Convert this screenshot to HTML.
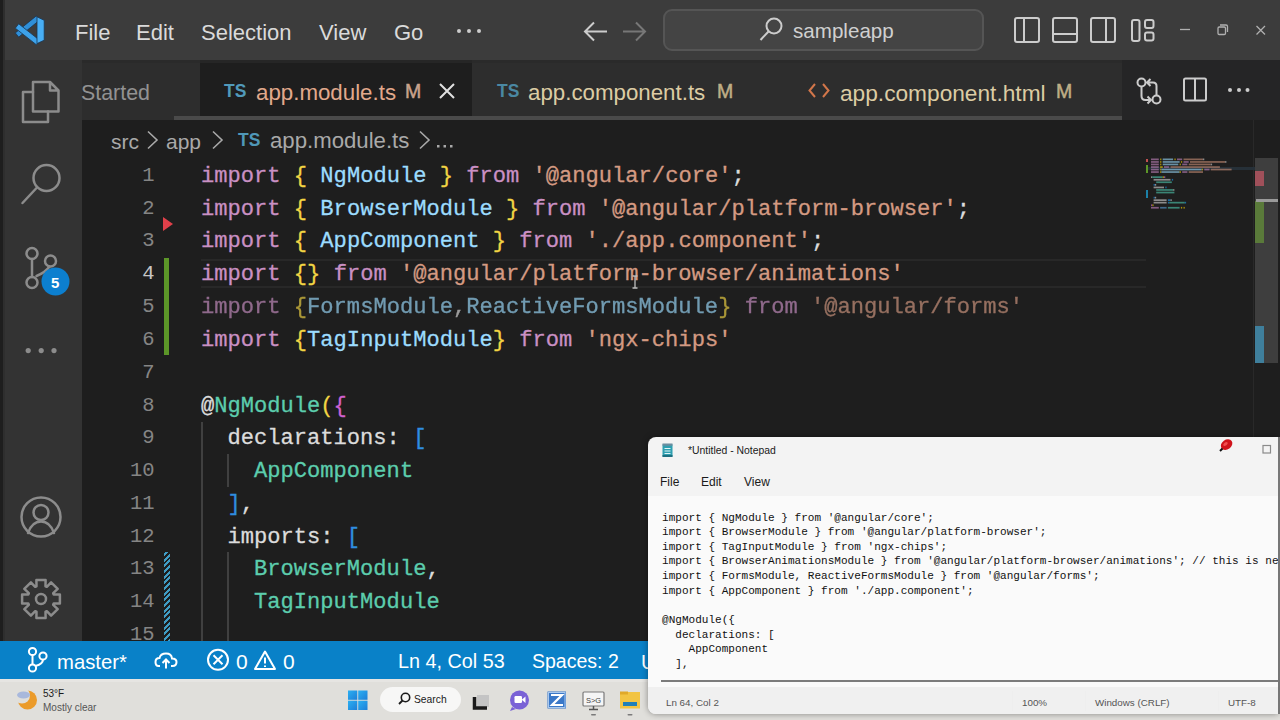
<!DOCTYPE html>
<html><head><meta charset="utf-8">
<style>
*{margin:0;padding:0;box-sizing:border-box}
html,body{width:1280px;height:720px;overflow:hidden;background:#1e1e1e;font-family:"Liberation Sans",sans-serif}
.a{position:absolute}
.t{position:absolute;white-space:pre;line-height:1}
#title{left:0;top:0;width:1280px;height:60px;background:#3c3c3c}
#act{left:0;top:60px;width:82px;height:581px;background:#333333}
#tabs{left:82px;top:60px;width:1198px;height:60px;background:#252526}
#editor{left:82px;top:120px;width:1198px;height:521px;background:#1e1e1e}
#status{left:0;top:641px;width:1280px;height:38px;background:#0981c8}
#taskbar{left:0;top:679px;width:1280px;height:41px;background:#e0dfdb}
.menu{color:#dadada;font-size:22px;top:21.5px}
.code{-webkit-text-stroke:0.3px currentColor;font-family:"Liberation Mono",monospace;font-size:22.1px;white-space:pre;position:absolute;left:201px;line-height:33px;height:33px}
.ln{font-family:"Liberation Mono",monospace;font-size:20.5px;position:absolute;width:80px;left:74.5px;text-align:right;color:#858585;line-height:33px;height:33px}
.k{color:#ca90c4}.b{color:#f2d544}.v{color:#9cdcfe}.s{color:#d49a82}.w{color:#dcdcdc}.g{color:#5ccdad}.p{color:#d062d0}.bl{color:#2f8ee0}
#np{left:648px;top:437px;width:630px;height:277px;background:#f3f3f3;border-radius:8px 0 0 8px;overflow:hidden;box-shadow:0 0 6px rgba(0,0,0,.4)}
.npc{font-family:"Liberation Mono",monospace;font-size:11.05px;line-height:14.65px;color:#111;white-space:pre;position:absolute}
</style></head><body>
<div id="title" class="a"></div>
<div id="act" class="a"></div>
<div id="tabs" class="a"></div>
<div id="editor" class="a"></div>
<div id="status" class="a"></div>
<div id="taskbar" class="a"></div>


<!-- title bar content -->
<svg class="a" style="left:0;top:0" width="60" height="60" viewBox="0 0 60 60">
<g stroke="#1a3550" stroke-width="0.8" stroke-linejoin="round">
<path d="M18.7 37.1L15.3 32.9L36.3 15.9L39.7 20.1Z" fill="#2f8fd8"/>
<path d="M15.3 28.2L18.7 23.8L39.7 40.3L36.3 44.7Z" fill="#3da2ea"/>
<path d="M37 16.8L44.2 20.3V40.2L37 43.6Z" fill="#48aef4"/>
</g>
</svg>
<svg class="a" style="left:455px;top:27px" width="28" height="8"><circle cx="4" cy="4" r="2" fill="#ccc"/><circle cx="14" cy="4" r="2" fill="#ccc"/><circle cx="24" cy="4" r="2" fill="#ccc"/></svg>
<svg class="a" style="left:582px;top:20px" width="28" height="24" fill="none" stroke="#cccccc" stroke-width="2"><path d="M3 11.5H25M12 2.5L3 11.5L12 20.5"/></svg>
<svg class="a" style="left:620px;top:20px" width="28" height="24" fill="none" stroke="#777777" stroke-width="2"><path d="M3 11.5H25M16 2.5L25 11.5L16 20.5"/></svg>
<div class="a" style="left:663px;top:9px;width:321px;height:42px;border:2px solid #555555;border-radius:9px;background:#444444"></div>
<svg class="a" style="left:758px;top:16px" width="28" height="28" fill="none" stroke="#cccccc" stroke-width="2"><circle cx="16" cy="10" r="7.5"/><path d="M10.5 15.5L2.5 24"/></svg>
<div class="t" style="left:793px;top:21px;font-size:20.6px;color:#d0d0d0">sampleapp</div>
<svg class="a" style="left:1012px;top:16px" width="150" height="30" fill="none" stroke="#cccccc" stroke-width="2">
<rect x="3" y="2" width="24" height="24" rx="2"/><path d="M12 2V26"/>
<rect x="41" y="2" width="24" height="24" rx="2"/><path d="M41 18H65"/>
<rect x="79" y="2" width="24" height="24" rx="2"/><path d="M94 2V26"/>
<rect x="120" y="4" width="7.5" height="21" rx="2"/><rect x="133" y="4" width="8.5" height="8" rx="2"/><rect x="133" y="16.5" width="8.5" height="8" rx="2"/>
</svg>
<svg class="a" style="left:1170px;top:16px" width="110" height="28" fill="none" stroke="#b0b0b0" stroke-width="1.3">
<path d="M10 13.5H20"/>
<rect x="48" y="11" width="7.5" height="7.5" rx="1.2"/><path d="M50 9H56Q57.5 9 57.5 10.5V16"/>
<path d="M86.5 10L95 18.5M95 10L86.5 18.5"/>
</svg>



<!-- activity bar -->
<div class="a" style="left:0;top:0;width:3px;height:641px;background:#1e1e1e"></div><div class="a" style="left:3px;top:0;width:2px;height:641px;background:#2e2e2e"></div>
<svg class="a" style="left:0;top:0" width="82" height="641" viewBox="0 0 82 641" fill="none" stroke="#8c8c8c" stroke-width="2.5" stroke-linejoin="round" stroke-linecap="round">
<path d="M33 82H50L58.5 90.5V111.5H33Z M50 82V90.5H58.5"/>
<path d="M33 92H23V122H48V111.5"/>
<circle cx="46.5" cy="178" r="13"/><path d="M37 187.5L22.5 203"/>
<circle cx="32" cy="253.5" r="5.5"/><circle cx="50.5" cy="261" r="5.5"/><circle cx="32" cy="282.5" r="5.5"/>
<path d="M32 259V277M36.5 276Q46 272 49.5 266.5"/>
<circle cx="41" cy="517" r="19.5"/><circle cx="41" cy="512.5" r="7.5"/><path d="M28 533Q32 521.5 41 521.5Q50 521.5 54 533"/>
<path d="M36.5 586.3 L36.4 580.1 L45.6 580.1 L45.5 586.3 L46.8 586.8 L51.1 582.3 L57.7 588.9 L53.2 593.2 L53.7 594.5 L59.9 594.4 L59.9 603.6 L53.7 603.5 L53.2 604.8 L57.7 609.1 L51.1 615.7 L46.8 611.2 L45.5 611.7 L45.6 617.9 L36.4 617.9 L36.5 611.7 L35.2 611.2 L30.9 615.7 L24.3 609.1 L28.8 604.8 L28.3 603.5 L22.1 603.6 L22.1 594.4 L28.3 594.5 L28.8 593.2 L24.3 588.9 L30.9 582.3 L35.2 586.8Z" stroke-linejoin="round"/><circle cx="41" cy="599" r="5"/>
</svg>
<svg class="a" style="left:0;top:0" width="82" height="641" viewBox="0 0 82 641">
<circle cx="55.5" cy="281.5" r="14" fill="#0c7fcf"/>
<circle cx="28.2" cy="350.6" r="2.6" fill="#8c8c8c"/><circle cx="41.2" cy="350.6" r="2.6" fill="#8c8c8c"/><circle cx="54" cy="350.6" r="2.6" fill="#8c8c8c"/>
</svg>
<div class="t" style="left:51px;top:275px;font-size:15px;font-weight:bold;color:#ffffff">5</div>

<!-- tabs -->
<div class="a" style="left:82px;top:60px;width:118px;height:60px;background:#2d2d2d"></div>
<div class="a" style="left:200px;top:60px;width:272px;height:60px;background:#1e1e1e"></div>
<div class="a" style="left:472px;top:60px;width:650px;height:60px;background:#2d2d2d"></div>
<div class="a" style="left:174px;top:116px;width:948px;height:4px;background:#4a4a4a"></div>
<div class="a" style="left:82px;top:60px;width:1198px;height:3px;background:#292929;opacity:.7"></div>
<div class="t" style="left:81px;top:82.5px;font-size:21.4px;color:#929292">Started</div>
<div class="t" style="left:224px;top:82.5px;font-size:17.5px;font-weight:bold;color:#519aba">TS</div>
<div class="t" style="left:256px;top:82px;font-size:22.3px;color:#e2a98c">app.module.ts</div>
<div class="t" style="left:405px;top:82px;font-size:19.5px;-webkit-text-stroke:0.5px currentColor;color:#c9a28c">M</div>
<svg class="a" style="left:437px;top:81px" width="20" height="20" fill="none" stroke="#e0e0e0" stroke-width="2"><path d="M3 3L17 17M17 3L3 17"/></svg>
<div class="t" style="left:497px;top:82.5px;font-size:17.5px;font-weight:bold;color:#4a88a3">TS</div>
<div class="t" style="left:528px;top:82px;font-size:22.3px;color:#dccca4">app.component.ts</div>
<div class="t" style="left:717px;top:82px;font-size:19.5px;-webkit-text-stroke:0.5px currentColor;color:#bfae86">M</div>
<svg class="a" style="left:808px;top:82px" width="22" height="18" fill="none" stroke="#d2764a" stroke-width="2"><path d="M7 2L1.5 8.5L7 15M15 2L20.5 8.5L15 15"/></svg>
<div class="t" style="left:840px;top:82px;font-size:22.7px;color:#dccca4">app.component.html</div>
<div class="t" style="left:1056px;top:82px;font-size:19.5px;-webkit-text-stroke:0.5px currentColor;color:#bfae86">M</div>
<div class="a" style="left:1122px;top:60px;width:158px;height:60px;background:#252526"></div>
<svg class="a" style="left:1130px;top:72px" width="140" height="36" fill="none" stroke="#cccccc" stroke-width="2">
<circle cx="11.5" cy="10.5" r="4"/><circle cx="26.5" cy="27.5" r="4"/>
<path d="M11.5 14.5V24Q11.5 28 15.5 28H21M17.5 24.5L21 28L17.5 31.5"/>
<path d="M26.5 23.5V14Q26.5 10.5 23 10.5H17M20.5 7L17 10.5L20.5 14"/>
<rect x="54" y="6.5" width="22" height="22" rx="1.5"/><path d="M65 6.5V28.5"/>
</svg>
<svg class="a" style="left:1222px;top:84px" width="32" height="12" fill="#cccccc"><circle cx="8" cy="6" r="2"/><circle cx="17" cy="6" r="2"/><circle cx="25.5" cy="6" r="2"/></svg>

<!-- breadcrumbs -->
<div class="t" style="left:111px;top:131px;font-size:21px;color:#a9a9a9">src</div>
<svg class="a" style="left:146px;top:130px" width="14" height="20" fill="none" stroke="#a9a9a9" stroke-width="1.6"><path d="M2 1.5L11 10L2 18.5"/></svg>
<div class="t" style="left:166px;top:131px;font-size:21px;color:#a9a9a9">app</div>
<svg class="a" style="left:211px;top:130px" width="14" height="20" fill="none" stroke="#a9a9a9" stroke-width="1.6"><path d="M2 1.5L11 10L2 18.5"/></svg>
<div class="t" style="left:238px;top:132px;font-size:17.5px;font-weight:bold;color:#4f98b8">TS</div>
<div class="t" style="left:270px;top:130px;font-size:22.2px;color:#a9a9a9">app.module.ts</div>
<svg class="a" style="left:418px;top:130px" width="14" height="20" fill="none" stroke="#a9a9a9" stroke-width="1.6"><path d="M2 1.5L11 10L2 18.5"/></svg>
<svg class="a" style="left:436px;top:144px" width="20" height="6" fill="#a9a9a9"><rect x="1" y="1" width="2.5" height="2.5"/><rect x="7.5" y="1" width="2.5" height="2.5"/><rect x="14" y="1" width="2.5" height="2.5"/></svg>


<!-- minimap + scrollbar -->
<div class="a" style="left:1253px;top:120px;width:1px;height:317px;background:#292929"></div>
<div class="a" style="left:1146px;top:166.5px;width:109px;height:3px;background:#263038"></div>
<svg class="a" style="left:0;top:0;opacity:.6;filter:blur(0.35px)" width="1280" height="720" viewBox="0 0 1280 720">
<rect x="1151.0" y="158.5" width="7.8" height="1.7" fill="#c586c0"/>
<rect x="1160.1" y="158.5" width="1.3" height="1.7" fill="#ffd700"/>
<rect x="1162.7" y="158.5" width="10.4" height="1.7" fill="#9cdcfe"/>
<rect x="1174.4" y="158.5" width="1.3" height="1.7" fill="#ffd700"/>
<rect x="1177.0" y="158.5" width="5.2" height="1.7" fill="#c586c0"/>
<rect x="1183.5" y="158.5" width="19.5" height="1.7" fill="#ce9178"/>
<rect x="1203.0" y="158.5" width="1.3" height="1.7" fill="#d4d4d4"/>
<rect x="1151.0" y="161.1" width="7.8" height="1.7" fill="#c586c0"/>
<rect x="1160.1" y="161.1" width="1.3" height="1.7" fill="#ffd700"/>
<rect x="1162.7" y="161.1" width="16.9" height="1.7" fill="#9cdcfe"/>
<rect x="1180.9" y="161.1" width="1.3" height="1.7" fill="#ffd700"/>
<rect x="1183.5" y="161.1" width="5.2" height="1.7" fill="#c586c0"/>
<rect x="1190.0" y="161.1" width="35.1" height="1.7" fill="#ce9178"/>
<rect x="1225.1" y="161.1" width="1.3" height="1.7" fill="#d4d4d4"/>
<rect x="1151.0" y="163.6" width="7.8" height="1.7" fill="#c586c0"/>
<rect x="1160.1" y="163.6" width="1.3" height="1.7" fill="#ffd700"/>
<rect x="1162.7" y="163.6" width="15.6" height="1.7" fill="#9cdcfe"/>
<rect x="1179.6" y="163.6" width="1.3" height="1.7" fill="#ffd700"/>
<rect x="1182.2" y="163.6" width="5.2" height="1.7" fill="#c586c0"/>
<rect x="1188.7" y="163.6" width="22.1" height="1.7" fill="#ce9178"/>
<rect x="1210.8" y="163.6" width="1.3" height="1.7" fill="#d4d4d4"/>
<rect x="1151.0" y="166.2" width="7.8" height="1.7" fill="#c586c0"/>
<rect x="1160.1" y="166.2" width="2.6" height="1.7" fill="#ffd700"/>
<rect x="1164.0" y="166.2" width="5.2" height="1.7" fill="#c586c0"/>
<rect x="1170.5" y="166.2" width="49.4" height="1.7" fill="#ce9178"/>
<rect x="1151.0" y="168.7" width="7.8" height="1.7" fill="#c586c0"/>
<rect x="1160.1" y="168.7" width="1.3" height="1.7" fill="#ffd700"/>
<rect x="1161.4" y="168.7" width="40.3" height="1.7" fill="#9cdcfe"/>
<rect x="1201.7" y="168.7" width="1.3" height="1.7" fill="#ffd700"/>
<rect x="1204.3" y="168.7" width="5.2" height="1.7" fill="#c586c0"/>
<rect x="1210.8" y="168.7" width="20.8" height="1.7" fill="#ce9178"/>
<rect x="1151.0" y="171.2" width="7.8" height="1.7" fill="#c586c0"/>
<rect x="1160.1" y="171.2" width="1.3" height="1.7" fill="#ffd700"/>
<rect x="1161.4" y="171.2" width="18.2" height="1.7" fill="#9cdcfe"/>
<rect x="1179.6" y="171.2" width="1.3" height="1.7" fill="#ffd700"/>
<rect x="1182.2" y="171.2" width="5.2" height="1.7" fill="#c586c0"/>
<rect x="1188.7" y="171.2" width="14.3" height="1.7" fill="#ce9178"/>
<rect x="1151.0" y="176.3" width="1.3" height="1.7" fill="#d4d4d4"/>
<rect x="1152.3" y="176.3" width="10.4" height="1.7" fill="#4ec9b0"/>
<rect x="1162.7" y="176.3" width="1.3" height="1.7" fill="#ffd700"/>
<rect x="1164.0" y="176.3" width="1.3" height="1.7" fill="#da70d6"/>
<rect x="1153.6" y="178.9" width="16.9" height="1.7" fill="#d4d4d4"/>
<rect x="1171.8" y="178.9" width="1.3" height="1.7" fill="#179fff"/>
<rect x="1156.2" y="181.4" width="15.6" height="1.7" fill="#4ec9b0"/>
<rect x="1153.6" y="184.0" width="1.3" height="1.7" fill="#179fff"/>
<rect x="1154.9" y="184.0" width="1.3" height="1.7" fill="#d4d4d4"/>
<rect x="1153.6" y="186.6" width="10.4" height="1.7" fill="#d4d4d4"/>
<rect x="1165.3" y="186.6" width="1.3" height="1.7" fill="#179fff"/>
<rect x="1156.2" y="189.1" width="16.9" height="1.7" fill="#4ec9b0"/>
<rect x="1173.1" y="189.1" width="1.3" height="1.7" fill="#d4d4d4"/>
<rect x="1156.2" y="191.7" width="18.2" height="1.7" fill="#4ec9b0"/>
<rect x="1153.6" y="196.8" width="1.3" height="1.7" fill="#179fff"/>
<rect x="1154.9" y="196.8" width="1.3" height="1.7" fill="#d4d4d4"/>
<rect x="1153.6" y="199.3" width="13.0" height="1.7" fill="#d4d4d4"/>
<rect x="1167.9" y="199.3" width="2.6" height="1.7" fill="#179fff"/>
<rect x="1170.5" y="199.3" width="1.3" height="1.7" fill="#d4d4d4"/>
<rect x="1153.6" y="201.8" width="13.0" height="1.7" fill="#d4d4d4"/>
<rect x="1167.9" y="201.8" width="1.3" height="1.7" fill="#179fff"/>
<rect x="1169.2" y="201.8" width="15.6" height="1.7" fill="#4ec9b0"/>
<rect x="1184.8" y="201.8" width="1.3" height="1.7" fill="#179fff"/>
<rect x="1151.0" y="204.4" width="1.3" height="1.7" fill="#da70d6"/>
<rect x="1152.3" y="204.4" width="1.3" height="1.7" fill="#ffd700"/>
<rect x="1151.0" y="206.9" width="7.8" height="1.7" fill="#c586c0"/>
<rect x="1160.1" y="206.9" width="6.5" height="1.7" fill="#569cd6"/>
<rect x="1167.9" y="206.9" width="11.7" height="1.7" fill="#4ec9b0"/>
<rect x="1180.9" y="206.9" width="1.3" height="1.7" fill="#ffd700"/>
<rect x="1183.5" y="206.9" width="1.3" height="1.7" fill="#ffd700"/>
</svg>
<div class="a" style="left:1146px;top:159px;width:2px;height:3px;background:#c05050"></div>
<div class="a" style="left:1146px;top:165px;width:2px;height:8px;background:#5c9628"></div>
<div class="a" style="left:1146px;top:190px;width:2px;height:8px;background:#1b81a8"></div>
<div class="a" style="left:1255px;top:158px;width:23px;height:205px;background:#3e3e3e"></div>
<div class="a" style="left:1255px;top:171px;width:9px;height:15px;background:#a0505a"></div>
<div class="a" style="left:1255px;top:201px;width:9px;height:42px;background:#5a7a3a"></div>
<div class="a" style="left:1256px;top:199px;width:22px;height:2.5px;background:#9a9a9a"></div>
<div class="a" style="left:1255px;top:326px;width:9px;height:37px;background:#3f7f9c"></div>

<!-- menu -->
<div class="t menu" style="left:75px">File</div>
<div class="t menu" style="left:136px">Edit</div>
<div class="t menu" style="left:201px">Selection</div>
<div class="t menu" style="left:319px">View</div>
<div class="t menu" style="left:394px">Go</div>


<!-- editor decorations -->
<div class="a" style="left:201px;top:259px;width:945px;height:29px;border-top:2px solid #282828;border-bottom:2px solid #282828"></div>
<div class="a" style="left:164px;top:258px;width:5px;height:97px;background:#5c9628"></div>
<svg class="a" style="left:162px;top:216px" width="12" height="16"><path d="M1 1L11 8L1 15Z" fill="#e0404a"/></svg>
<div class="a" style="left:201px;top:422px;width:2px;height:219px;background:#404040"></div>
<div class="a" style="left:227px;top:454px;width:2px;height:33px;background:#404040"></div>
<div class="a" style="left:227px;top:552px;width:2px;height:89px;background:#404040"></div>
<div class="a" style="left:164px;top:552px;width:6px;height:89px;background:repeating-linear-gradient(-45deg,#3f9cc4 0 2px,transparent 2px 4px)"></div>

<!-- code -->
<div class="ln" style="top:159.3px">1</div>
<div class="ln" style="top:192.3px">2</div>
<div class="ln" style="top:224.3px">3</div>
<div class="ln" style="top:257.3px;color:#c6c6c6">4</div>
<div class="ln" style="top:290.3px">5</div>
<div class="ln" style="top:323.3px">6</div>
<div class="ln" style="top:356.3px">7</div>
<div class="ln" style="top:389.3px">8</div>
<div class="ln" style="top:421.3px">9</div>
<div class="ln" style="top:454.3px">10</div>
<div class="ln" style="top:487.3px">11</div>
<div class="ln" style="top:520.3px">12</div>
<div class="ln" style="top:552.3px">13</div>
<div class="ln" style="top:585.3px">14</div>
<div class="ln" style="top:618.3px">15</div>

<div class="code" style="top:159.8px"><span class="k">import</span> <span class="b">{</span> <span class="v">NgModule</span> <span class="b">}</span> <span class="k">from</span> <span class="s">'@angular/core'</span><span class="w">;</span></div>
<div class="code" style="top:192.8px"><span class="k">import</span> <span class="b">{</span> <span class="v">BrowserModule</span> <span class="b">}</span> <span class="k">from</span> <span class="s">'@angular/platform-browser'</span><span class="w">;</span></div>
<div class="code" style="top:224.8px"><span class="k">import</span> <span class="b">{</span> <span class="v">AppComponent</span> <span class="b">}</span> <span class="k">from</span> <span class="s">'./app.component'</span><span class="w">;</span></div>
<div class="code" style="top:257.8px"><span class="k">import</span> <span class="b">{}</span> <span class="k">from</span> <span class="s">'@angular/platform-browser/animations'</span></div>
<div class="code" style="top:290.8px;opacity:.66"><span class="k">import</span> <span class="b">{</span><span class="v">FormsModule</span><span class="w">,</span><span class="v">ReactiveFormsModule</span><span class="b">}</span> <span class="k">from</span> <span class="s">'@angular/forms'</span></div>
<div class="code" style="top:323.8px"><span class="k">import</span> <span class="b">{</span><span class="v">TagInputModule</span><span class="b">}</span> <span class="k">from</span> <span class="s">'ngx-chips'</span></div>
<div class="code" style="top:389.8px"><span class="w">@</span><span class="g">NgModule</span><span class="b">(</span><span class="p">{</span></div>
<div class="code" style="top:421.8px"><span class="w">  declarations: </span><span class="bl">[</span></div>
<div class="code" style="top:454.8px"><span class="g">    AppComponent</span></div>
<div class="code" style="top:487.8px"><span class="bl">  ]</span><span class="w">,</span></div>
<div class="code" style="top:520.8px"><span class="w">  imports: </span><span class="bl">[</span></div>
<div class="code" style="top:552.8px"><span class="g">    BrowserModule</span><span class="w">,</span></div>
<div class="code" style="top:585.8px"><span class="g">    TagInputModule</span></div>


<!-- status bar -->
<svg class="a" style="left:0;top:641px" width="300" height="38" viewBox="0 641 300 38" fill="none" stroke="#ffffff" stroke-width="2">
<circle cx="32.5" cy="651.5" r="3.6"/><circle cx="43" cy="656" r="3.6"/><circle cx="32.5" cy="668" r="3.6"/>
<path d="M32.5 655V664.5M43 659.5Q43 664 35.5 666"/>
<path d="M160 666H158.5Q155.5 666 155.5 662Q155.5 658 159.5 658Q160.5 653.5 166 653.5Q171.5 653.5 172 658.5Q176.5 658.5 176.5 662Q176.5 666 172.5 666H171"/>
<path d="M166 668.5V660M162.5 663L166 659.5L169.5 663"/>
<circle cx="218" cy="659.8" r="10"/><path d="M213.5 655.3L222.5 664.3M222.5 655.3L213.5 664.3"/>
<path d="M265 651.5L275 669H255Z" stroke-linejoin="round"/><path d="M265 657.5V663.5M265 665.5V667"/>
</svg>
<div class="t" style="left:57px;top:651.5px;font-size:20.3px;color:#ffffff">master*</div>
<div class="t" style="left:236px;top:651px;font-size:21px;color:#ffffff">0</div>
<div class="t" style="left:283px;top:651px;font-size:21px;color:#ffffff">0</div>
<div class="t" style="left:398px;top:652px;font-size:19.8px;color:#ffffff">Ln 4, Col 53</div>
<div class="t" style="left:532px;top:652px;font-size:19.5px;color:#ffffff">Spaces: 2</div>
<div class="t" style="left:641px;top:652px;font-size:20px;color:#ffffff">U</div>

<!-- taskbar -->
<div class="a" style="left:0;top:679px;width:1280px;height:3px;background:#e6e5e2"></div>
<svg class="a" style="left:0;top:679px" width="660" height="41" viewBox="0 679 660 41">
<defs><linearGradient id="wg" x1="0" y1="0" x2="1" y2="1"><stop offset="0" stop-color="#2bb0f2"/><stop offset="1" stop-color="#1e7fd8"/></linearGradient></defs>
<circle cx="27.5" cy="700" r="9.5" fill="#eb9b2a"/><circle cx="22" cy="695.5" r="8" fill="#e0dfdb"/>
<ellipse cx="23.5" cy="695" rx="6.5" ry="3.5" fill="#a8b8dc"/>
<rect x="348" y="690.5" width="9.3" height="9.3" fill="url(#wg)"/><rect x="358.2" y="690.5" width="9.3" height="9.3" fill="url(#wg)"/>
<rect x="348" y="700.7" width="9.3" height="9.3" fill="url(#wg)"/><rect x="358.2" y="700.7" width="9.3" height="9.3" fill="url(#wg)"/>
<rect x="380" y="687" width="81" height="25" rx="12.5" fill="#f7f7f6"/>
<circle cx="405.5" cy="697.5" r="4.2" fill="none" stroke="#1a1a1a" stroke-width="1.6"/><path d="M402.5 700.5L399 704" stroke="#1a1a1a" stroke-width="1.8"/>
<rect x="477" y="695" width="12" height="12" fill="#c4c4c4"/><path d="M474.5 697V708H487" fill="none" stroke="#1a1a1a" stroke-width="3.5"/>
<circle cx="519.5" cy="700" r="9.5" fill="#7a62d6"/><path d="M512 707L510 711L516 709Z" fill="#7a62d6"/><rect x="514.5" y="696" width="7.5" height="7" rx="1.2" fill="#fff"/><path d="M522 699.5L525.5 696.5V703L522 700Z" fill="#fff"/>
<rect x="547.5" y="691.5" width="18.5" height="17" fill="#3a78c8"/><rect x="548.5" y="692.5" width="16.5" height="15" fill="none" stroke="#a8c8ee" stroke-width="1"/><path d="M551 695H562L552 705H563" fill="none" stroke="#fff" stroke-width="2.2"/>
<rect x="583" y="692" width="21" height="14" rx="1" fill="#f5f5f5" stroke="#7a7a7a" stroke-width="1.2"/><path d="M593.5 706V709M589 709.5H598" stroke="#555" stroke-width="1.5"/>
<text x="593.5" y="703" font-size="7.5" text-anchor="middle" fill="#444" font-family="Liberation Sans">S&gt;G</text>
<rect x="620" y="692" width="20" height="16.5" fill="#f2c443"/><rect x="620" y="691.5" width="8" height="3" fill="#e0a92a"/><rect x="623" y="702" width="14" height="4" fill="#1f7fb8"/>
<rect x="591" y="714" width="5" height="1.6" rx=".8" fill="#7a7a7a"/><rect x="627.5" y="714" width="5" height="1.6" rx=".8" fill="#7a7a7a"/>
</svg>
<div class="t" style="left:43px;top:689px;font-size:10px;color:#1a1a1a">53°F</div>
<div class="t" style="left:43px;top:703px;font-size:10px;color:#555555">Mostly clear</div>
<div class="t" style="left:414px;top:695px;font-size:10.3px;color:#1a1a1a">Search</div>

<svg class="a" style="left:630px;top:274px" width="10" height="16" fill="none" stroke="#bdbdbd" stroke-width="1.3"><path d="M5 2.5V13.5M2.5 2H4.3Q5 2 5 3Q5 2 5.7 2H7.5M2.5 14H4.3Q5 14 5 13Q5 14 5.7 14H7.5"/></svg>
<!-- notepad -->
<div id="np" class="a">
<div class="a" style="left:0;top:59px;width:640px;height:191px;background:#fafafa"></div>
<div class="a" style="left:13px;top:243px;width:640px;height:2px;background:#7c7c7c"></div>
<div class="a" style="left:0;top:250px;width:640px;height:27px;background:#f0f0f0"></div>
<svg class="a" style="left:14px;top:6px" width="12" height="15"><rect x="0.5" y="1" width="10" height="13" rx="1" fill="#2f9fb0"/><rect x="0.5" y="0.5" width="10" height="2.2" fill="#6b8ea0"/><path d="M2.5 5.5H8.5M2.5 8H8.5M2.5 10.5H8.5" stroke="#dff4f7" stroke-width="1"/><rect x="0.5" y="12" width="10" height="2" fill="#1d6f80"/></svg>
<div class="t" style="left:40px;top:9px;font-size:10.4px;color:#1a1a1a">*Untitled - Notepad</div>
<svg class="a" style="left:566px;top:0px" width="24" height="18"><ellipse cx="12.6" cy="7.6" rx="6.2" ry="4.8" transform="rotate(-35 12.6 7.6)" fill="#d0141c"/><ellipse cx="11.5" cy="7" rx="2.5" ry="1.5" transform="rotate(-35 11.5 7)" fill="#f05050"/><path d="M8.5 11.5L6 14" stroke="#111" stroke-width="2"/></svg>
<svg class="a" style="left:613px;top:7px" width="12" height="12"><rect x="2" y="1.5" width="7.5" height="7.5" fill="none" stroke="#8a8a8a" stroke-width="1.2"/></svg>
<div class="t" style="left:12px;top:39px;font-size:12px;color:#1a1a1a">File</div>
<div class="t" style="left:53px;top:39px;font-size:12px;color:#1a1a1a">Edit</div>
<div class="t" style="left:96px;top:39px;font-size:12px;color:#1a1a1a">View</div>
<div class="npc" style="left:14px;top:73.5px">import { NgModule } from '@angular/core';
import { BrowserModule } from '@angular/platform-browser';
import { TagInputModule } from 'ngx-chips';
import { BrowserAnimationsModule } from '@angular/platform-browser/animations'; // this is needed
import { FormsModule, ReactiveFormsModule } from '@angular/forms';
import { AppComponent } from './app.component';

@NgModule({
  declarations: [
    AppComponent
  ],</div>
<div class="t" style="left:18px;top:260.5px;font-size:9.8px;color:#555">Ln 64, Col 2</div>
<div class="a" style="left:364px;top:254px;width:1px;height:20px;background:#eeeeee"></div>
<div class="t" style="left:374px;top:260.5px;font-size:9.8px;color:#555">100%</div>
<div class="a" style="left:437px;top:254px;width:1px;height:20px;background:#eeeeee"></div>
<div class="t" style="left:447px;top:260.5px;font-size:9.8px;color:#555">Windows (CRLF)</div>
<div class="a" style="left:570px;top:254px;width:1px;height:20px;background:#eeeeee"></div>
<div class="t" style="left:580px;top:260.5px;font-size:9.8px;color:#555">UTF-8</div>
</div>
<div class="a" style="left:1278px;top:437px;width:2px;height:277px;background:#777"></div>

</body></html>
